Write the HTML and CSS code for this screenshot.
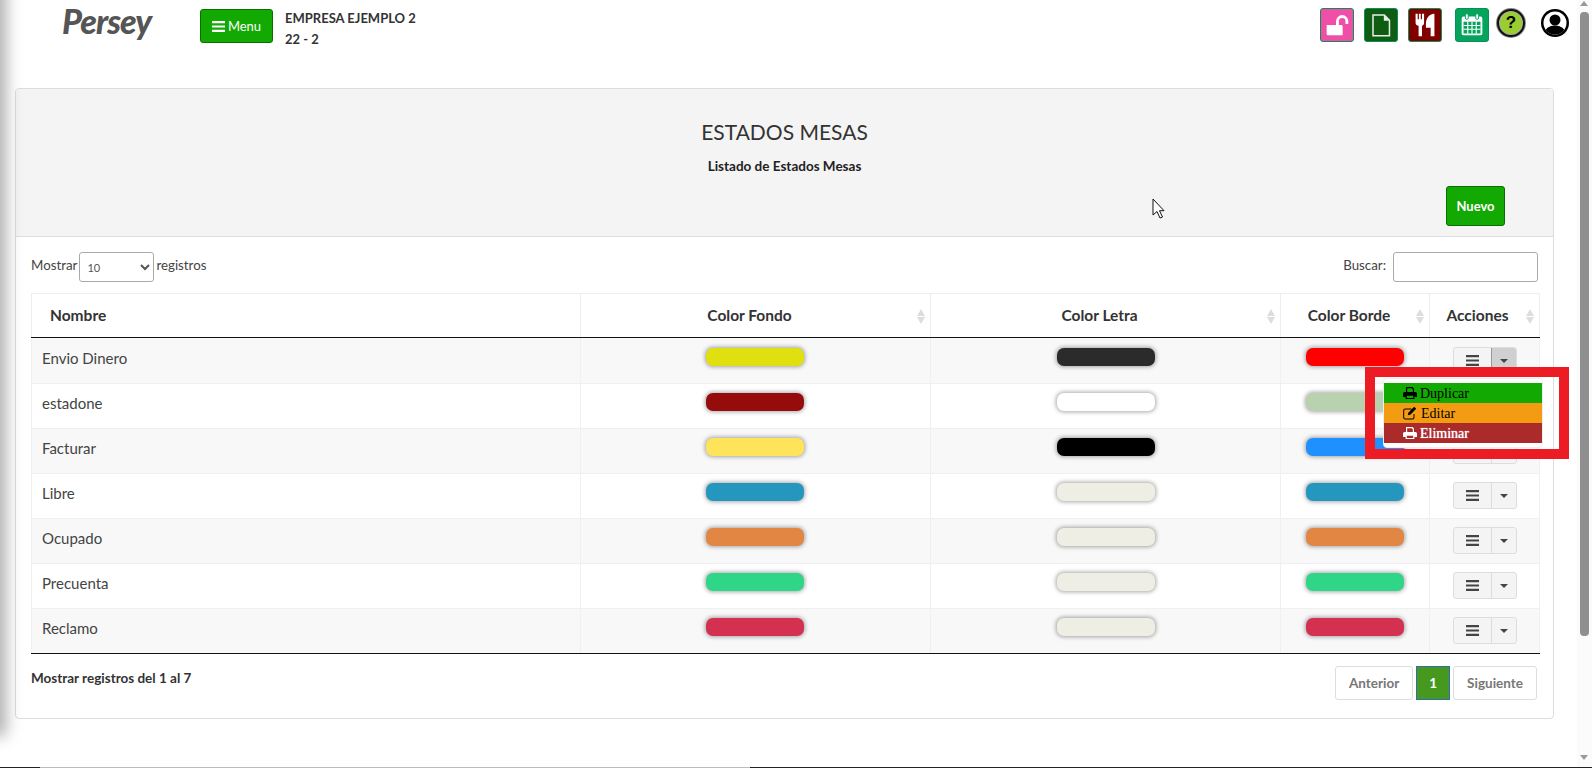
FILE: index.html
```html
<!DOCTYPE html>
<html lang="es">
<head>
<meta charset="utf-8">
<title>Estados Mesas</title>
<link rel="stylesheet" href="styles.css">
</head>
<body>
<svg class="defs" width="0" height="0">
  <symbol id="bars" viewBox="0 0 12 10"><path d="M0 0h12v2H0zM0 4h12v2H0zM0 8h12v2H0z"/></symbol>
  <symbol id="print" viewBox="0 0 14 14"><path d="M3 1h6.500L11 2.500V6H9.800V3.200L8.800 2.200H4.200V6H3zM1.500 6h11A1.500 1.500 0 0 1 14 7.500V11h-2.600v2H2.600v-2H0V7.500A1.500 1.500 0 0 1 1.500 6zM3.800 9.800v2.100h6.400V9.800z" fill-rule="evenodd"/></symbol>
  <symbol id="edit" viewBox="0 0 14 14"><path d="M2.200 2.500h6.300v1H2.200a1 1 0 0 0-1 1v7a1 1 0 0 0 1 1h7.300a1 1 0 0 0 1-1V8h1v3.500a2 2 0 0 1-2 2H2.200a2 2 0 0 1-2-2v-7a2 2 0 0 1 2-2zM11.200.8l2 2L7.300 8.800 4.800 9.300l.5-2.500z"/></symbol>
</svg>

<div class="side-shadow"></div>

<header class="topbar">
  <div class="logo">Persey</div>
  <button class="menu-btn"><svg class="menu-bars"><use href="#bars"/></svg>Menu</button>
  <div class="company">
    <div>EMPRESA EJEMPLO 2</div>
    <div>22 - 2</div>
  </div>
  <nav class="top-icons">
    <a class="tile tile-pink"><svg viewBox="0 0 34 34" width="32" height="32"><path d="M6 17h15.500a1.500 1.500 0 0 1 1.500 1.500V28H7.500A1.500 1.500 0 0 1 6 26.500z" fill="#fff"/><path d="M17.500 17v-4a5 5 0 0 1 10 0v3" fill="none" stroke="#fff" stroke-width="3"/></svg></a>
    <a class="tile tile-green"><svg viewBox="0 0 34 34" width="32" height="32"><path d="M8.500 6.500H20.500L26 12v16.500H8.500z" fill="none" stroke="#e8f0e8" stroke-width="1.600"/><path d="M20 6.500v6h6z" fill="#e8f0e8"/></svg></a>
    <a class="tile tile-maroon"><svg viewBox="0 0 34 34" width="32" height="32" fill="#fff"><path d="M7 5h2.200v6h1.300V5h2v6h1.300V5H16v9.500c0 1.800-1 2.800-2.200 3.300V29h-3.600V17.800C8 17.300 7 16.300 7 14.500z"/><path d="M18 16c0-6 3-10.500 9-11v24h-4V20h-5z"/></svg></a>
    <a class="tile tile-teal"><svg viewBox="0 0 34 34" width="32" height="32"><rect x="6" y="8" width="22" height="20" rx="2" fill="#fff"/><rect x="10" y="5" width="3" height="6" rx="1.500" fill="#fff" stroke="#04a45c"/><rect x="21" y="5" width="3" height="6" rx="1.500" fill="#fff" stroke="#04a45c"/><path d="M8 13.500h18v12.500H8z" fill="#04a45c"/><path d="M8 17.500h18M8 21.500h18M12.500 13.500v12.500M17 13.500v12.500M21.500 13.500v12.500" stroke="#fff" stroke-width="1.200"/></svg></a>
    <a class="round-help"><span>?</span></a>
    <a class="round-user"><svg viewBox="0 0 28 28" width="28" height="28"><circle cx="14" cy="14" r="14" fill="#000"/><circle cx="14" cy="14" r="11.500" fill="#fff"/><clipPath id="userclip"><circle cx="14" cy="14" r="11.500"/></clipPath><g clip-path="url(#userclip)"><circle cx="14" cy="11" r="5.500"/><ellipse cx="14" cy="24" rx="10.500" ry="7.500"/></g></svg></a>
  </nav>
</header>

<main class="card">
  <section class="card-head">
    <h1 class="title">ESTADOS MESAS</h1>
    <p class="subtitle">Listado de Estados Mesas</p>
    <div class="head-actions"><button class="new-btn">Nuevo</button></div>
  </section>
  <section class="card-body">
    <div class="filters">
      <label class="len">Mostrar <select class="len-select"><option>10</option></select> registros</label>
      <label class="search">Buscar: <input class="search-input" type="text"></label>
    </div>
    <table class="grid">
      <colgroup><col class="c1"><col class="c2"><col class="c3"><col class="c4"><col class="c5"></colgroup>
      <thead>
        <tr>
          <th class="th-name">Nombre</th>
          <th class="sortable">Color Fondo<i class="sort"></i></th>
          <th class="sortable">Color Letra<i class="sort"></i></th>
          <th class="sortable th-borde">Color Borde<i class="sort"></i></th>
          <th class="sortable th-acc">Acciones<i class="sort"></i></th>
        </tr>
      </thead>
      <tbody>
        <tr><td class="name">Envio Dinero</td><td class="fondo"><span class="swatch" style="background:#e0e010"></span></td><td><span class="swatch" style="background:#2b2b2b"></span></td><td><span class="swatch" style="background:#ff0000"></span></td><td><div class="btns"><button class="b-main"><svg><use href="#bars"/></svg></button><button class="b-caret is-open"><i></i></button></div></td></tr>
        <tr><td class="name">estadone</td><td class="fondo"><span class="swatch" style="background:#960c0c"></span></td><td><span class="swatch" style="background:#ffffff"></span></td><td><span class="swatch" style="background:#b8d2b0"></span></td><td><div class="btns"><button class="b-main"><svg><use href="#bars"/></svg></button><button class="b-caret"><i></i></button></div></td></tr>
        <tr><td class="name">Facturar</td><td class="fondo"><span class="swatch" style="background:#ffe35a"></span></td><td><span class="swatch" style="background:#000000"></span></td><td><span class="swatch" style="background:#1e90ff"></span></td><td><div class="btns"><button class="b-main"><svg><use href="#bars"/></svg></button><button class="b-caret"><i></i></button></div></td></tr>
        <tr><td class="name">Libre</td><td class="fondo"><span class="swatch" style="background:#2596be"></span></td><td><span class="swatch" style="background:#eeeee4"></span></td><td><span class="swatch" style="background:#2596be"></span></td><td><div class="btns"><button class="b-main"><svg><use href="#bars"/></svg></button><button class="b-caret"><i></i></button></div></td></tr>
        <tr><td class="name">Ocupado</td><td class="fondo"><span class="swatch" style="background:#e28743"></span></td><td><span class="swatch" style="background:#eeeee4"></span></td><td><span class="swatch" style="background:#e28743"></span></td><td><div class="btns"><button class="b-main"><svg><use href="#bars"/></svg></button><button class="b-caret"><i></i></button></div></td></tr>
        <tr><td class="name">Precuenta</td><td class="fondo"><span class="swatch" style="background:#2fd688"></span></td><td><span class="swatch" style="background:#eeeee4"></span></td><td><span class="swatch" style="background:#2fd688"></span></td><td><div class="btns"><button class="b-main"><svg><use href="#bars"/></svg></button><button class="b-caret"><i></i></button></div></td></tr>
        <tr><td class="name">Reclamo</td><td class="fondo"><span class="swatch" style="background:#d4304f"></span></td><td><span class="swatch" style="background:#eeeee4"></span></td><td><span class="swatch" style="background:#d4304f"></span></td><td><div class="btns"><button class="b-main"><svg><use href="#bars"/></svg></button><button class="b-caret"><i></i></button></div></td></tr>
      </tbody>
    </table>
    <div class="table-foot">
      <div class="info">Mostrar registros del 1 al 7</div>
      <div class="pager">
        <a class="pg">Anterior</a>
        <a class="pg pg-current">1</a>
        <a class="pg">Siguiente</a>
      </div>
    </div>
  </section>
</main>

<ul class="drop">
  <li class="d-green"><svg><use href="#print"/></svg> Duplicar</li>
  <li class="d-orange"><svg><use href="#edit"/></svg> Editar</li>
  <li class="d-red"><svg><use href="#print"/></svg> Eliminar</li>
</ul>
<div class="callout"></div>

<svg class="pointer" viewBox="0 0 13 21" width="13" height="21"><path d="M1 1v16l4-3.500 3 6.500 2.500-1-3-6.300H12z" fill="#fff" stroke="#111" stroke-width="1"/></svg>

<div class="scrollbar"><i class="sb-up"></i><div class="sb-thumb"></div><i class="sb-down"></i></div>
<div class="bottom-line"></div>
</body>
</html>
```
FILE: styles.css
```css
* { box-sizing: border-box; }
html, body { margin: 0; padding: 0; }
body {
  width: 1592px;
  height: 768px;
  overflow: hidden;
  position: relative;
  background: #fff;
  color: #333;
  font-family: "Lato", "Noto Sans", sans-serif;
  font-size: 14px;
}
.defs { position: absolute; }

.side-shadow {
  position: absolute;
  left: -12px;
  top: -30px;
  width: 12px;
  height: 760px;
  box-shadow: 0 0 16px 6px rgba(0,0,0,.32);
}

/* top bar */
.topbar {
  height: 88px;
  display: flex;
  align-items: flex-start;
  padding-left: 62px;
  padding-right: 23px;
}
.logo {
  width: 138px;
  margin-top: -2px;
  font-family: "Lato", sans-serif;
  font-weight: 900;
  font-style: italic;
  font-size: 34px;
  letter-spacing: -1px;
  line-height: 46px;
  color: #555;
}
.menu-btn {
  margin-top: 9px;
  width: 73px;
  height: 34px;
  display: flex;
  align-items: center;
  justify-content: center;
  gap: 3px;
  background: #12a902;
  border: 1px solid #0b6e02;
  border-radius: 3px;
  color: #fff;
  font: 13px "Lato", sans-serif;
  padding: 0;
}
.menu-bars { width: 13px; height: 11px; fill: #fff; }
.company {
  margin-left: 12px;
  margin-top: 8px;
  font-size: 13px;
  font-weight: 700;
  line-height: 21px;
  color: #333;
}
.top-icons {
  margin-left: auto;
  display: flex;
  align-items: flex-start;
  margin-top: 8px;
}
.tile {
  width: 34px;
  height: 34px;
  border: 1px solid #0b8f5a;
  border-radius: 3px;
  display: flex;
  margin-right: 10px;
}
.tile-pink { background: #f04fa8; }
.tile-green { background: #0f5c12; }
.tile-maroon { background: #800000; margin-right: 13px; }
.tile-teal { background: #04a45c; margin-right: 8px; }
.round-help {
  width: 28px;
  height: 28px;
  margin-top: 1px;
  border-radius: 50%;
  background: #9acd32;
  border: 2px solid #111;
  box-shadow: 0 0 0 1px #aaa inset, 0 0 0 1px #888;
  display: flex;
  align-items: center;
  justify-content: center;
  font: 700 17px "Liberation Sans", sans-serif;
  color: #000;
}
.round-user { width: 28px; height: 28px; margin-left: 16px; margin-top: 1px; }

/* card */
.card {
  margin-left: 15px;
  width: 1539px;
  height: 631px;
  border: 1px solid #ddd;
  border-radius: 4px;
}
.card-head {
  height: 148px;
  background: #f4f4f4;
  border-bottom: 1px solid #ddd;
  border-radius: 3px 3px 0 0;
  text-align: center;
  padding-top: 28px;
}
.title {
  margin: 0;
  font-size: 21px;
  line-height: 30px;
  font-weight: 400;
  color: #333;
}
.subtitle {
  margin: 11px 0 0;
  font-size: 13.500px;
  line-height: 16px;
  font-weight: 700;
  color: #222;
}
.head-actions {
  display: flex;
  justify-content: flex-end;
  margin-top: 12px;
  padding-right: 48px;
}
.new-btn {
  width: 59px;
  height: 40px;
  background: #12a902;
  border: 1px solid #0b6e02;
  border-radius: 3px;
  color: #fff;
  font: 700 13px "Lato", sans-serif;
  padding: 0;
}
.card-body { padding: 15px 13px 0 15px; }
.filters {
  display: flex;
  justify-content: space-between;
  align-items: flex-start;
  height: 30px;
  padding-right: 2px;
  font-size: 13.300px;
  line-height: 26px;
  color: #444;
}
.len { display: flex; align-items: flex-start; gap: 2px; }
.len-select {
  width: 75px;
  height: 30px;
  font: 11px "Lato", sans-serif;
  color: #555;
  background: #fff;
  border: 1px solid #aaa;
  border-radius: 3px;
  padding-left: 3px;
}
.search { display: flex; align-items: flex-start; gap: 7px; }
.search-input {
  width: 145px;
  height: 30px;
  border: 1px solid #aaa;
  border-radius: 3px;
  background: #fff;
}

/* table */
.grid {
  margin-top: 11px;
  width: 1508px;
  table-layout: fixed;
  border-collapse: collapse;
}
.c1 { width: 549px; }
.c2 { width: 350px; }
.c3 { width: 350px; }
.c4 { width: 149px; }
.c5 { width: 110px; }
.grid th {
  position: relative;
  height: 44px;
  border: 1px solid #eee;
  border-bottom: 1px solid #111;
  font-size: 15.500px;
  font-weight: 700;
  color: #333;
  padding: 0 12px 2px 0;
}
.grid th.th-name { text-align: left; padding-left: 18px; }
.grid th.th-acc { padding-right: 14px; }
.sort { position: absolute; right: 5px; top: 15px; width: 8px; height: 15px; }
.sort::before, .sort::after {
  content: "";
  position: absolute;
  left: 0;
  border-left: 4px solid transparent;
  border-right: 4px solid transparent;
}
.sort::before { top: 0; border-bottom: 7px solid #ddd; }
.sort::after { bottom: 0; border-top: 7px solid #ddd; }
.grid td {
  height: 45px;
  border: 1px solid #f0f0f0;
  padding: 9px 0 0;
  vertical-align: top;
}
.grid tbody tr:first-child td { height: 46px; padding-top: 10px; }
.grid tbody tr:nth-child(odd) td { background: #f8f8f8; }
.grid tbody tr:last-child td { border-bottom: 1px solid #111; }
.grid td.fondo { padding-right: 2px; }
.grid td.name {
  padding: 7px 0 0 10px;
  font-size: 15px;
  line-height: 24px;
  color: #444;
}
.grid tbody tr:first-child td.name { padding-top: 8px; }
.swatch {
  display: block;
  width: 98px;
  height: 18px;
  margin: 0 auto;
  border-radius: 7px;
  box-shadow: 0 0 4px 1px rgba(0,0,0,.35);
}
.btns {
  display: flex;
  width: 64px;
  height: 27px;
  margin: -1px auto 0;
  border: 1px solid #ddd;
  border-radius: 3px;
  background: #f4f4f4;
  overflow: hidden;
}
.btns button {
  border: 0;
  padding: 0;
  background: transparent;
  display: flex;
  align-items: center;
  justify-content: center;
}
.b-main { width: 37px; }
.b-main svg { width: 13px; height: 11px; fill: #444; }
.b-caret { width: 25px; border-left: 1px solid #ddd !important; }
.b-caret i {
  border-left: 4px solid transparent;
  border-right: 4px solid transparent;
  border-top: 4px solid #444;
}
.b-caret.is-open { background: #d0d0d0; border-left-color: #999 !important; }

.table-foot {
  display: flex;
  justify-content: space-between;
  align-items: flex-start;
  margin-top: 12px;
}
.info { font-size: 13.500px; font-weight: 700; color: #333; line-height: 24px; }
.pager { display: flex; gap: 3px; padding-right: 3px; }
.pg {
  height: 34px;
  border: 1px solid #ddd;
  border-radius: 3px;
  display: flex;
  align-items: center;
  padding: 0 13px;
  font-size: 13.500px;
  font-weight: 700;
  color: #777;
}
.pg-current {
  background: #46981f;
  border-color: #2f6fae;
  border-radius: 0;
  color: #fff;
  padding: 0 12px;
}

/* overlays */
.drop {
  position: absolute;
  left: 1383px;
  top: 378px;
  width: 160px;
  height: 70px;
  margin: 0;
  padding: 4px 0 5px;
  list-style: none;
  background: #fff;
  border: 1px solid #eee;
  border-radius: 4px;
  font: 14px "Liberation Serif", serif;
  color: #000;
}
.drop li { height: 20px; line-height: 19px; padding-left: 19px; display: flex; align-items: center; gap: 3px; }
.drop svg { width: 14px; height: 14px; fill: currentColor; }
.d-green { background: #12a902; }
.d-orange { background: #f39c12; }
.d-orange svg { margin-right: 1px; }
.d-red { background: #ab2a2a; color: #fff; text-shadow: 0 0 1px #fff; }
.callout {
  position: absolute;
  left: 1365px;
  top: 367px;
  width: 204px;
  height: 92px;
  border: 10px solid #ed1c24;
}
.pointer { position: absolute; left: 1152px; top: 198px; }
.scrollbar {
  position: absolute;
  left: 1577px;
  top: 0;
  width: 15px;
  height: 767px;
  background: #fbfbfb;
}
.sb-thumb {
  position: absolute;
  left: 3px;
  top: 12px;
  width: 9px;
  height: 624px;
  background: #8f8f8f;
  border-radius: 4px;
}
.sb-up, .sb-down {
  position: absolute;
  left: 3px;
  border-left: 4.500px solid transparent;
  border-right: 4.500px solid transparent;
}
.sb-up { top: 1px; border-bottom: 5px solid #999; }
.sb-down { top: 755px; border-top: 5px solid #999; }
.bottom-line {
  position: absolute;
  left: 0;
  top: 767px;
  width: 100%;
  height: 1px;
  background: linear-gradient(to right, #222 40px, #bbb 40px, #bbb 750px, #222 750px);
}
```
